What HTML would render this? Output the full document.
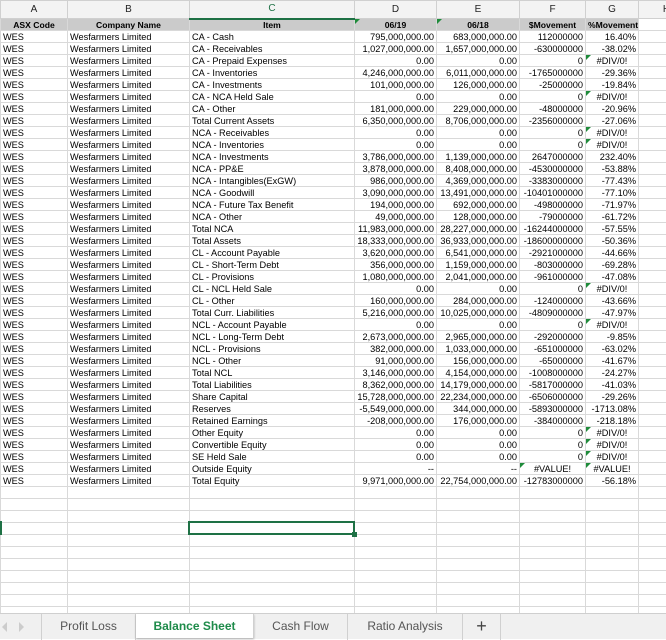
<!DOCTYPE html><html><head><meta charset="utf-8"><style>
*{margin:0;padding:0;box-sizing:border-box}
body{width:666px;height:639px;overflow:hidden;background:#fff;font-family:"Liberation Sans",Arial,sans-serif;position:relative}
#grid{position:absolute;left:0;top:0;width:666px;height:613px;overflow:hidden}
table{border-collapse:collapse;table-layout:fixed;width:694px}
td{border:1px solid #d9d9d9;height:12px;font-size:9.2px;line-height:10px;padding:0 2px;white-space:nowrap;overflow:hidden;color:#000;position:relative}
tr.h td{height:18px;background:#f3f3f3;text-align:center;font-size:10px;color:#222;border-color:#d0d0d0}
tr.h td.sel{color:#1e7145;border-bottom:2px solid #1e7145}
tr.t td{background:#cbcbcb;font-weight:bold;text-align:center;font-size:8.6px}
tr.t td.w{background:#fff}
td.r{text-align:right}
td.c{text-align:center}
.tri:before{content:"";position:absolute;left:0;top:0;border-top:5px solid #1e8b3a;border-right:5px solid transparent}
#selbox{position:absolute;left:188px;top:521px;width:167px;height:14px;border:2px solid #1e7145}
#selbox:after{content:"";position:absolute;right:-4px;bottom:-4px;width:5px;height:5px;background:#1e7145}
#rowmark{position:absolute;left:0;top:521px;width:2px;height:14px;background:#1e7145}
#tabs{position:absolute;left:0;top:613px;width:666px;height:26px;background:#f0f0f0;border-top:1px solid #cfcfcf;font-size:12px;color:#555}
.tab{position:absolute;top:0;height:26px;line-height:24px;text-align:center;border-right:1px solid #d0d0d0}
.tab.act{background:#fff;color:#1e8b4a;font-weight:bold;height:24px;box-shadow:0 1px 2px #aaa}
</style></head><body>
<div id="grid"><table>
<colgroup><col style="width:67px"><col style="width:122px"><col style="width:165px"><col style="width:82px"><col style="width:83px"><col style="width:66px"><col style="width:53px"><col style="width:56px"></colgroup>
<tr class="h"><td>A</td><td>B</td><td class="sel">C</td><td>D</td><td>E</td><td>F</td><td>G</td><td>H</td></tr>
<tr class="t"><td>ASX Code</td><td>Company Name</td><td>Item</td><td class="tri">06/19</td><td class="tri">06/18</td><td>$Movement</td><td>%Movement</td><td class="w"></td></tr>
<tr><td>WES</td><td>Wesfarmers Limited</td><td>CA - Cash</td><td class="r">795,000,000.00</td><td class="r">683,000,000.00</td><td class="r">112000000</td><td class="r">16.40%</td><td></td></tr>
<tr><td>WES</td><td>Wesfarmers Limited</td><td>CA - Receivables</td><td class="r">1,027,000,000.00</td><td class="r">1,657,000,000.00</td><td class="r">-630000000</td><td class="r">-38.02%</td><td></td></tr>
<tr><td>WES</td><td>Wesfarmers Limited</td><td>CA - Prepaid Expenses</td><td class="r">0.00</td><td class="r">0.00</td><td class="r">0</td><td class="c tri">#DIV/0!</td><td></td></tr>
<tr><td>WES</td><td>Wesfarmers Limited</td><td>CA - Inventories</td><td class="r">4,246,000,000.00</td><td class="r">6,011,000,000.00</td><td class="r">-1765000000</td><td class="r">-29.36%</td><td></td></tr>
<tr><td>WES</td><td>Wesfarmers Limited</td><td>CA - Investments</td><td class="r">101,000,000.00</td><td class="r">126,000,000.00</td><td class="r">-25000000</td><td class="r">-19.84%</td><td></td></tr>
<tr><td>WES</td><td>Wesfarmers Limited</td><td>CA - NCA Held Sale</td><td class="r">0.00</td><td class="r">0.00</td><td class="r">0</td><td class="c tri">#DIV/0!</td><td></td></tr>
<tr><td>WES</td><td>Wesfarmers Limited</td><td>CA - Other</td><td class="r">181,000,000.00</td><td class="r">229,000,000.00</td><td class="r">-48000000</td><td class="r">-20.96%</td><td></td></tr>
<tr><td>WES</td><td>Wesfarmers Limited</td><td>Total Current Assets</td><td class="r">6,350,000,000.00</td><td class="r">8,706,000,000.00</td><td class="r">-2356000000</td><td class="r">-27.06%</td><td></td></tr>
<tr><td>WES</td><td>Wesfarmers Limited</td><td>NCA - Receivables</td><td class="r">0.00</td><td class="r">0.00</td><td class="r">0</td><td class="c tri">#DIV/0!</td><td></td></tr>
<tr><td>WES</td><td>Wesfarmers Limited</td><td>NCA - Inventories</td><td class="r">0.00</td><td class="r">0.00</td><td class="r">0</td><td class="c tri">#DIV/0!</td><td></td></tr>
<tr><td>WES</td><td>Wesfarmers Limited</td><td>NCA - Investments</td><td class="r">3,786,000,000.00</td><td class="r">1,139,000,000.00</td><td class="r">2647000000</td><td class="r">232.40%</td><td></td></tr>
<tr><td>WES</td><td>Wesfarmers Limited</td><td>NCA - PP&amp;E</td><td class="r">3,878,000,000.00</td><td class="r">8,408,000,000.00</td><td class="r">-4530000000</td><td class="r">-53.88%</td><td></td></tr>
<tr><td>WES</td><td>Wesfarmers Limited</td><td>NCA - Intangibles(ExGW)</td><td class="r">986,000,000.00</td><td class="r">4,369,000,000.00</td><td class="r">-3383000000</td><td class="r">-77.43%</td><td></td></tr>
<tr><td>WES</td><td>Wesfarmers Limited</td><td>NCA - Goodwill</td><td class="r">3,090,000,000.00</td><td class="r">13,491,000,000.00</td><td class="r">-10401000000</td><td class="r">-77.10%</td><td></td></tr>
<tr><td>WES</td><td>Wesfarmers Limited</td><td>NCA - Future Tax Benefit</td><td class="r">194,000,000.00</td><td class="r">692,000,000.00</td><td class="r">-498000000</td><td class="r">-71.97%</td><td></td></tr>
<tr><td>WES</td><td>Wesfarmers Limited</td><td>NCA - Other</td><td class="r">49,000,000.00</td><td class="r">128,000,000.00</td><td class="r">-79000000</td><td class="r">-61.72%</td><td></td></tr>
<tr><td>WES</td><td>Wesfarmers Limited</td><td>Total NCA</td><td class="r">11,983,000,000.00</td><td class="r">28,227,000,000.00</td><td class="r">-16244000000</td><td class="r">-57.55%</td><td></td></tr>
<tr><td>WES</td><td>Wesfarmers Limited</td><td>Total Assets</td><td class="r">18,333,000,000.00</td><td class="r">36,933,000,000.00</td><td class="r">-18600000000</td><td class="r">-50.36%</td><td></td></tr>
<tr><td>WES</td><td>Wesfarmers Limited</td><td>CL - Account Payable</td><td class="r">3,620,000,000.00</td><td class="r">6,541,000,000.00</td><td class="r">-2921000000</td><td class="r">-44.66%</td><td></td></tr>
<tr><td>WES</td><td>Wesfarmers Limited</td><td>CL - Short-Term Debt</td><td class="r">356,000,000.00</td><td class="r">1,159,000,000.00</td><td class="r">-803000000</td><td class="r">-69.28%</td><td></td></tr>
<tr><td>WES</td><td>Wesfarmers Limited</td><td>CL - Provisions</td><td class="r">1,080,000,000.00</td><td class="r">2,041,000,000.00</td><td class="r">-961000000</td><td class="r">-47.08%</td><td></td></tr>
<tr><td>WES</td><td>Wesfarmers Limited</td><td>CL - NCL Held Sale</td><td class="r">0.00</td><td class="r">0.00</td><td class="r">0</td><td class="c tri">#DIV/0!</td><td></td></tr>
<tr><td>WES</td><td>Wesfarmers Limited</td><td>CL - Other</td><td class="r">160,000,000.00</td><td class="r">284,000,000.00</td><td class="r">-124000000</td><td class="r">-43.66%</td><td></td></tr>
<tr><td>WES</td><td>Wesfarmers Limited</td><td>Total Curr. Liabilities</td><td class="r">5,216,000,000.00</td><td class="r">10,025,000,000.00</td><td class="r">-4809000000</td><td class="r">-47.97%</td><td></td></tr>
<tr><td>WES</td><td>Wesfarmers Limited</td><td>NCL - Account Payable</td><td class="r">0.00</td><td class="r">0.00</td><td class="r">0</td><td class="c tri">#DIV/0!</td><td></td></tr>
<tr><td>WES</td><td>Wesfarmers Limited</td><td>NCL - Long-Term Debt</td><td class="r">2,673,000,000.00</td><td class="r">2,965,000,000.00</td><td class="r">-292000000</td><td class="r">-9.85%</td><td></td></tr>
<tr><td>WES</td><td>Wesfarmers Limited</td><td>NCL - Provisions</td><td class="r">382,000,000.00</td><td class="r">1,033,000,000.00</td><td class="r">-651000000</td><td class="r">-63.02%</td><td></td></tr>
<tr><td>WES</td><td>Wesfarmers Limited</td><td>NCL - Other</td><td class="r">91,000,000.00</td><td class="r">156,000,000.00</td><td class="r">-65000000</td><td class="r">-41.67%</td><td></td></tr>
<tr><td>WES</td><td>Wesfarmers Limited</td><td>Total NCL</td><td class="r">3,146,000,000.00</td><td class="r">4,154,000,000.00</td><td class="r">-1008000000</td><td class="r">-24.27%</td><td></td></tr>
<tr><td>WES</td><td>Wesfarmers Limited</td><td>Total Liabilities</td><td class="r">8,362,000,000.00</td><td class="r">14,179,000,000.00</td><td class="r">-5817000000</td><td class="r">-41.03%</td><td></td></tr>
<tr><td>WES</td><td>Wesfarmers Limited</td><td>Share Capital</td><td class="r">15,728,000,000.00</td><td class="r">22,234,000,000.00</td><td class="r">-6506000000</td><td class="r">-29.26%</td><td></td></tr>
<tr><td>WES</td><td>Wesfarmers Limited</td><td>Reserves</td><td class="r">-5,549,000,000.00</td><td class="r">344,000,000.00</td><td class="r">-5893000000</td><td class="r">-1713.08%</td><td></td></tr>
<tr><td>WES</td><td>Wesfarmers Limited</td><td>Retained Earnings</td><td class="r">-208,000,000.00</td><td class="r">176,000,000.00</td><td class="r">-384000000</td><td class="r">-218.18%</td><td></td></tr>
<tr><td>WES</td><td>Wesfarmers Limited</td><td>Other Equity</td><td class="r">0.00</td><td class="r">0.00</td><td class="r">0</td><td class="c tri">#DIV/0!</td><td></td></tr>
<tr><td>WES</td><td>Wesfarmers Limited</td><td>Convertible Equity</td><td class="r">0.00</td><td class="r">0.00</td><td class="r">0</td><td class="c tri">#DIV/0!</td><td></td></tr>
<tr><td>WES</td><td>Wesfarmers Limited</td><td>SE Held Sale</td><td class="r">0.00</td><td class="r">0.00</td><td class="r">0</td><td class="c tri">#DIV/0!</td><td></td></tr>
<tr><td>WES</td><td>Wesfarmers Limited</td><td>Outside Equity</td><td class="r">--</td><td class="r">--</td><td class="c tri">#VALUE!</td><td class="c tri">#VALUE!</td><td></td></tr>
<tr><td>WES</td><td>Wesfarmers Limited</td><td>Total Equity</td><td class="r">9,971,000,000.00</td><td class="r">22,754,000,000.00</td><td class="r">-12783000000</td><td class="r">-56.18%</td><td></td></tr>
<tr><td></td><td></td><td></td><td></td><td></td><td></td><td></td><td></td></tr>
<tr><td></td><td></td><td></td><td></td><td></td><td></td><td></td><td></td></tr>
<tr><td></td><td></td><td></td><td></td><td></td><td></td><td></td><td></td></tr>
<tr><td></td><td></td><td></td><td></td><td></td><td></td><td></td><td></td></tr>
<tr><td></td><td></td><td></td><td></td><td></td><td></td><td></td><td></td></tr>
<tr><td></td><td></td><td></td><td></td><td></td><td></td><td></td><td></td></tr>
<tr><td></td><td></td><td></td><td></td><td></td><td></td><td></td><td></td></tr>
<tr><td></td><td></td><td></td><td></td><td></td><td></td><td></td><td></td></tr>
<tr><td></td><td></td><td></td><td></td><td></td><td></td><td></td><td></td></tr>
<tr><td></td><td></td><td></td><td></td><td></td><td></td><td></td><td></td></tr>
<tr><td></td><td></td><td></td><td></td><td></td><td></td><td></td><td></td></tr>
<tr><td></td><td></td><td></td><td></td><td></td><td></td><td></td><td></td></tr>
</table>
<div id="selbox"></div><div id="rowmark"></div>
</div>
<div id="tabs">
<div style="position:absolute;left:2px;top:8px;width:0;height:0;border-right:5px solid #ccc;border-top:5px solid transparent;border-bottom:5px solid transparent"></div>
<div style="position:absolute;left:19px;top:8px;width:0;height:0;border-left:5px solid #ccc;border-top:5px solid transparent;border-bottom:5px solid transparent"></div>
<div class="tab" style="left:41px;width:1px;border-right:1px solid #d0d0d0"></div>
<div class="tab" style="left:42px;width:94px">Profit Loss</div>
<div class="tab act" style="left:136px;width:118px">Balance Sheet</div>
<div class="tab" style="left:254px;width:94px">Cash Flow</div>
<div class="tab" style="left:348px;width:115px">Ratio Analysis</div>
<div class="tab" style="left:463px;width:38px;font-size:18px;color:#444">+</div>
</div>
</body></html>
